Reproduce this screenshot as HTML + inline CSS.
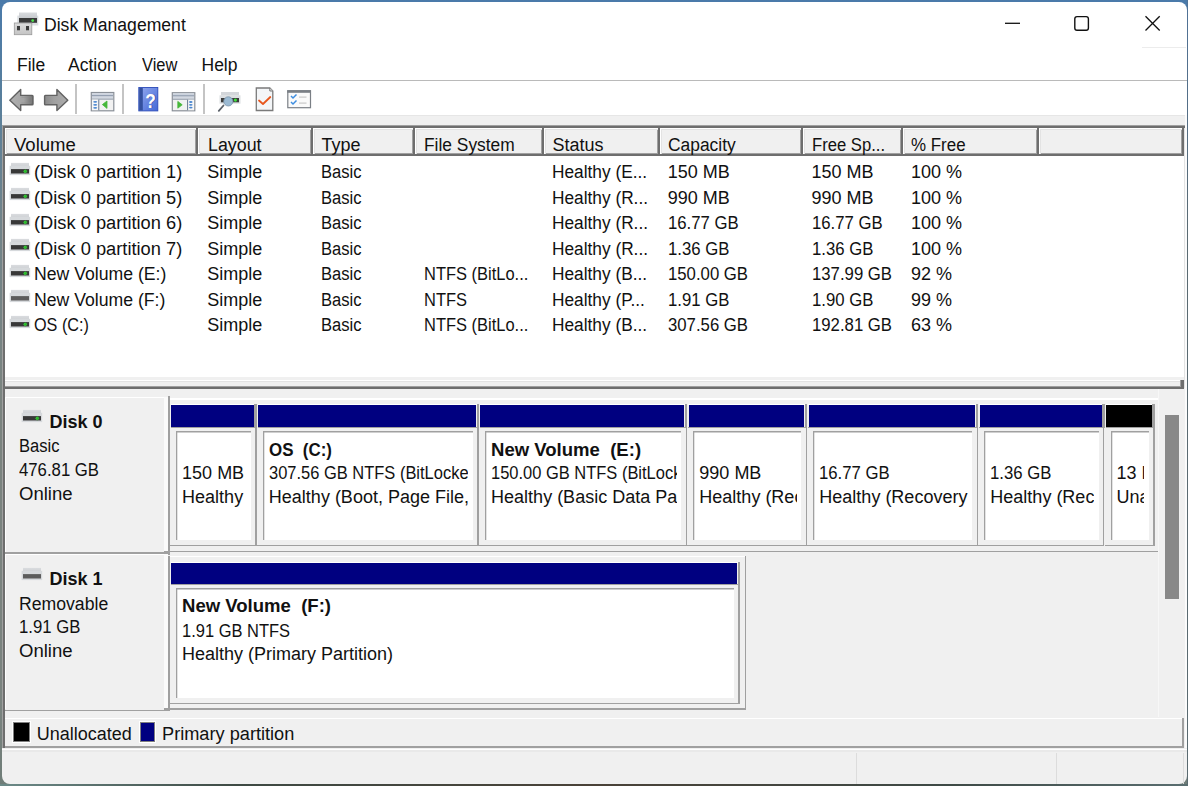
<!DOCTYPE html>
<html><head><meta charset="utf-8">
<style>
*{margin:0;padding:0;box-sizing:border-box}
html,body{width:1188px;height:786px;overflow:hidden}
body{position:relative;background:linear-gradient(180deg,#4a7aaa 0,#587f9c 100px,#72848a 220px,#7b8480 400px,#7b8480 700px,#6f7d78 100%);font-family:"Liberation Sans",sans-serif;color:#111}
.a{position:absolute}
#win{left:2px;top:2px;width:1185px;height:782px;border-radius:8px;background:linear-gradient(#fff 0,#fff 113px,#f0f0f0 113px);overflow:hidden}
.t{position:absolute;white-space:pre;font-size:18px;line-height:20px}
.hl{position:absolute;height:1px}
.vl{position:absolute;width:1px}
.hd{top:128px;height:28px;background:#f0f0f0;border-right:2px solid #6e6e6e;border-bottom:2px solid #6e6e6e;box-shadow:inset 1px 1px #fff,inset 2px 2px #e3e3e3,inset -1px -1px #a0a0a0}
</style></head><body>
<div id="win" class="a"></div>

<!-- title bar -->
<svg class="a" style="left:12px;top:10px" width="30" height="28" viewBox="0 0 30 28">
  <defs>
    <linearGradient id="gtop" x1="0" y1="0" x2="0" y2="1"><stop offset="0" stop-color="#d9dbde"/><stop offset="1" stop-color="#c6c9cd"/></linearGradient>
    <linearGradient id="gplug" x1="0" y1="0" x2="0" y2="1"><stop offset="0" stop-color="#dcdcdc"/><stop offset="1" stop-color="#c4c4c4"/></linearGradient>
  </defs>
  <rect x="5.3" y="5.6" width="21" height="9.9" fill="#dcdfe2"/><rect x="7" y="2.5" width="18" height="6" fill="url(#gtop)"/>
  <rect x="7" y="8" width="18" height="4.8" fill="#3a3a3a"/>
  <circle cx="20.7" cy="10.6" r="1.4" fill="#4ee04e"/>
  <rect x="2.3" y="13" width="17.5" height="11.7" fill="url(#gplug)" stroke="#9a9a9a" stroke-width="0.8"/>
  <rect x="5" y="16" width="3" height="4.3" fill="#3c3c3c"/>
  <rect x="14" y="16" width="3" height="4.3" fill="#3c3c3c"/>
</svg>
<div class="t" style="left:44px;top:15px;font-size:17.6px">Disk Management</div>
<svg class="a" style="left:1000px;top:10px" width="170" height="28" viewBox="1000 10 170 28">
<path d="M1005 23.3H1020" stroke="#111" stroke-width="1.3"/>
<rect x="1074.8" y="16.6" width="13.6" height="13.6" rx="2.2" fill="none" stroke="#111" stroke-width="1.4"/>
<path d="M1145.5 16.3L1159.7 30.5M1159.7 16.3L1145.5 30.5" stroke="#111" stroke-width="1.3"/>
</svg>

<!-- menu -->
<div class="t" style="left:17px;top:55.3px;font-size:17.5px">File</div>
<div class="t" style="left:68px;top:55.3px;font-size:17.5px">Action</div>
<div class="t" style="left:141.8px;top:55.3px;font-size:17.5px;transform:scaleX(0.94);transform-origin:0 0">View</div>
<div class="t" style="left:201.5px;top:55.3px;font-size:17.5px">Help</div>
<div class="a" style="left:2px;top:80px;width:1185px;height:1px;background:#bababa"></div>

<!-- toolbar icons -->
<svg class="a" style="left:0;top:82px" width="330" height="33" viewBox="0 82 330 33">
  <defs>
    <linearGradient id="garrl" x1="0" y1="0" x2="1" y2="0"><stop offset="0" stop-color="#b0b0b0"/><stop offset="0.6" stop-color="#a4a4a4"/><stop offset="1" stop-color="#6e6e6e"/></linearGradient><linearGradient id="garrr" x1="0" y1="0" x2="1" y2="0"><stop offset="0" stop-color="#8a8a8a"/><stop offset="0.4" stop-color="#a0a0a0"/><stop offset="1" stop-color="#acacac"/></linearGradient>
    <linearGradient id="ghelp" x1="0" y1="0" x2="1" y2="1"><stop offset="0" stop-color="#93a9ee"/><stop offset="1" stop-color="#4468d6"/></linearGradient>
  </defs>
  <path d="M9.8 100.2L20.7 89.6V95.4H32.2Q33 95.4 33 96.2V103.9Q33 104.8 32.2 104.8H20.7V110.6Z" fill="url(#garrl)" stroke="#626262" stroke-width="1.4" stroke-linejoin="round"/><path d="M21.5 97.2H31.2V103H21.5" fill="none" stroke="#8c8c8c" stroke-width="0.8" opacity="0.6"/>
  <path d="M67.8 100.2L56.9 89.6V95.4H45.4Q44.6 95.4 44.6 96.2V103.9Q44.6 104.8 45.4 104.8H56.9V110.6Z" fill="url(#garrr)" stroke="#626262" stroke-width="1.4" stroke-linejoin="round"/>
  <!-- console tree icon -->
  <rect x="91.3" y="92.5" width="22.5" height="18.3" fill="#f2f2f2" stroke="#8a9098" stroke-width="1.2"/>
  <rect x="92" y="93.2" width="21" height="2.2" fill="#ccd3de"/>
  <rect x="92" y="95.3" width="21" height="1.1" fill="#74839a"/>
  <rect x="92" y="96.5" width="21" height="2" fill="#d2d8e2"/>
  <rect x="92" y="98.6" width="21" height="1" fill="#8893a3"/>
  <rect x="92" y="99.6" width="6.5" height="10.6" fill="#f7f7f7"/>
  <rect x="98.2" y="99.5" width="1.1" height="10.8" fill="#74839a"/>
  <ellipse cx="95.2" cy="101.8" rx="2" ry="0.9" fill="#4a86d0"/>
  <ellipse cx="95.2" cy="104.8" rx="2" ry="0.9" fill="#4a86d0"/>
  <ellipse cx="95.2" cy="107.8" rx="2" ry="0.9" fill="#4a86d0"/>
  <path d="M102.4 104.6L107 101V108.4Z" fill="#46b83a" stroke="#46b83a" stroke-width="0.8" stroke-linejoin="round"/>
  <!-- help -->
  <rect x="138.8" y="87.5" width="19" height="23.4" fill="url(#ghelp)" stroke="#2c4bb8" stroke-width="0.9"/>
  <rect x="139.2" y="88" width="3.6" height="22.5" fill="#34509e"/>
  <text transform="translate(151.4 108.4) scale(0.82 1)" font-family="Liberation Sans" font-weight="bold" font-size="21" fill="#1e2e70" opacity="0.5" text-anchor="middle">?</text><text transform="translate(150.6 107.6) scale(0.82 1)" font-family="Liberation Sans" font-weight="bold" font-size="21" fill="#fff" text-anchor="middle">?</text>
  <!-- action pane icon -->
  <rect x="172.3" y="92.7" width="22.5" height="18.1" fill="#f2f2f2" stroke="#8a9098" stroke-width="1.2"/>
  <rect x="173" y="93.3" width="21" height="2.2" fill="#ccd3de"/>
  <rect x="173" y="95.4" width="21" height="1.1" fill="#74839a"/>
  <rect x="173" y="96.6" width="21" height="2" fill="#d2d8e2"/>
  <rect x="173" y="98.7" width="21" height="1" fill="#8893a3"/>
  <rect x="187.5" y="99.7" width="6.5" height="10.5" fill="#f7f7f7"/>
  <rect x="187" y="99.6" width="1.1" height="10.7" fill="#74839a"/>
  <ellipse cx="190.8" cy="102" rx="1.8" ry="0.9" fill="#4a86d0"/>
  <ellipse cx="190.8" cy="104.8" rx="1.8" ry="0.9" fill="#4a86d0"/>
  <ellipse cx="190.8" cy="107.6" rx="1.8" ry="0.9" fill="#4a86d0"/>
  <path d="M182.2 104.8L177.8 101.4V108.2Z" fill="#46b83a" stroke="#46b83a" stroke-width="0.8" stroke-linejoin="round"/>
  <!-- rescan -->
  <rect x="221" y="92" width="18" height="3.6" fill="#d3d6da"/>
  <rect x="219.5" y="95.3" width="21" height="8.4" fill="#dcdfe2"/>
  <rect x="221" y="98" width="18" height="4.3" fill="#3c3c3c"/>
  <circle cx="235.4" cy="100.1" r="1.6" fill="#3ee03e"/>
  <path d="M223.5 105.5L218.8 110.8" stroke="#5a6068" stroke-width="1.8" stroke-linecap="round"/>
  <circle cx="228.3" cy="101.4" r="4.6" fill="#9bbad3" stroke="#7d95aa" stroke-width="0.8"/>
  <!-- doc check -->
  <path d="M256.3 88H269.8L272.8 91V110.5H256.3Z" fill="#f4f6f8" stroke="#7a7a7a" stroke-width="1.3"/>
  <path d="M269.8 88V91H272.8" fill="#e0e0e0" stroke="#7a7a7a" stroke-width="1"/>
  <path d="M259 100.5L263 104L270.3 97" fill="none" stroke="#e8571e" stroke-width="1.8" stroke-linecap="round" stroke-linejoin="round"/>
  <!-- checklist -->
  <rect x="287.8" y="90.8" width="22.7" height="16.9" fill="#fafafa" stroke="#7a7f85" stroke-width="1.2"/>
  <rect x="287.2" y="90.2" width="23.8" height="2.6" fill="#7a7f85"/>
  <path d="M291 96L293 98L296.5 94.5M291 102L293 104L296.5 100.5" fill="none" stroke="#3d8de0" stroke-width="1.5"/>
  <rect x="299" y="96.5" width="7.5" height="1.2" fill="#c8c8c8"/>
  <rect x="299" y="102.5" width="7.5" height="1.2" fill="#c8c8c8"/>
</svg>
<!-- toolbar separators -->
<div class="a" style="left:75px;top:84px;width:1.5px;height:30px;background:#c4c4c4"></div>
<div class="a" style="left:122px;top:84px;width:1.5px;height:30px;background:#c4c4c4"></div>
<div class="a" style="left:203px;top:84px;width:1.5px;height:30px;background:#c4c4c4"></div>

<!-- defs -->
<svg width="0" height="0" style="position:absolute">
  <defs>
    <linearGradient id="gdrv" x1="0" y1="0" x2="0" y2="1"><stop offset="0" stop-color="#dadcdf"/><stop offset="1" stop-color="#c9ccd0"/></linearGradient>
    <g id="drv">
      <rect x="11" y="0.9" width="18" height="5" fill="url(#gdrv)"/>
      <rect x="9.6" y="3.8" width="20.6" height="9.3" fill="#d6d9dc"/>
      <rect x="11" y="7.1" width="18" height="4.4" fill="#383838"/>
      <circle cx="25.3" cy="9.3" r="1.6" fill="#3fe83f"/>
      <path d="M23.3 9.3H27.3M25.3 7.3V11.3" stroke="#2aa82a" stroke-width="0.8"/>
    </g>
    <g id="drvf">
      <rect x="11" y="0.9" width="18" height="5" fill="url(#gdrv)"/>
      <rect x="9.6" y="3.8" width="20.6" height="9.3" fill="#d6d9dc"/>
      <rect x="11" y="7.1" width="18" height="4.4" fill="#5c5c5c"/>
    </g>
  </defs>
</svg>
<!-- list view -->
<div class="a" style="left:2px;top:125px;width:1183px;height:1px;background:#a0a0a0"></div>
<div class="a" style="left:3px;top:126px;width:1182px;height:2px;background:#6e6e6e"></div>
<div class="a" style="left:2px;top:115px;width:1185px;height:1px;background:#e6e6e6"></div>
<div class="a" style="left:2px;top:125px;width:1px;height:623px;background:#a0a0a0"></div>
<div class="a" style="left:3px;top:126px;width:2px;height:622px;background:#6e6e6e"></div>
<div class="a" style="left:5px;top:128px;width:1179px;height:249px;background:#fff"></div>
<div class="a" style="left:1184px;top:128px;width:1px;height:260px;background:#e3e3e3"></div>
<div class="a" style="left:1185px;top:115px;width:2px;height:633px;background:#fbfbfb"></div>
<!-- list bottom splitter -->
<div class="a" style="left:5px;top:377px;width:1179px;height:3px;background:#f0f0f0"></div>
<div class="a" style="left:5px;top:380px;width:1179px;height:9px;background:#f0f0f0;box-shadow:inset 0 1px #fff,inset 0 2px #e3e3e3"></div>
<div class="a" style="left:5px;top:386px;width:1179px;height:1px;background:#a0a0a0"></div>
<div class="a" style="left:5px;top:387px;width:1179px;height:2px;background:#6e6e6e"></div>
<div class="a" style="left:1180px;top:380px;width:1px;height:7px;background:#a0a0a0"></div>
<div class="a" style="left:1181px;top:380px;width:3px;height:9px;background:#6e6e6e"></div>
<div class="a hd" style="left:5px;width:193px"></div>
<div class="a hd" style="left:198px;width:115px"></div>
<div class="a hd" style="left:313px;width:102px"></div>
<div class="a hd" style="left:415px;width:129px"></div>
<div class="a hd" style="left:544px;width:116px"></div>
<div class="a hd" style="left:660px;width:143px"></div>
<div class="a hd" style="left:803px;width:100px"></div>
<div class="a hd" style="left:903px;width:136px"></div>
<div class="a hd" style="left:1039px;width:145px"></div>
<div class="t" style="left:14px;top:134.5px;transform:scaleX(1.03);transform-origin:0 0;">Volume</div>
<div class="t" style="left:207.5px;top:134.5px;transform:scaleX(0.99);transform-origin:0 0;">Layout</div>
<div class="t" style="left:321.5px;top:134.5px;">Type</div>
<div class="t" style="left:423.5px;top:134.5px;transform:scaleX(0.965);transform-origin:0 0;">File System</div>
<div class="t" style="left:552.5px;top:134.5px;">Status</div>
<div class="t" style="left:668px;top:134.5px;transform:scaleX(0.967);transform-origin:0 0;">Capacity</div>
<div class="t" style="left:811.5px;top:134.5px;transform:scaleX(0.925);transform-origin:0 0;">Free Sp...</div>
<div class="t" style="left:910.8px;top:134.5px;transform:scaleX(0.94);transform-origin:0 0;">% Free</div>
<svg class="a" style="left:0;top:161.5px" width="40" height="16"><use href="#drv"/></svg>
<div class="t" style="left:34.1px;top:162px;transform:scaleX(1.015);transform-origin:0 0;">(Disk 0 partition 1)</div>
<div class="t" style="left:207.3px;top:162px;">Simple</div>
<div class="t" style="left:321.3px;top:162px;transform:scaleX(0.92);transform-origin:0 0;">Basic</div>
<div class="t" style="left:552.3px;top:162px;transform:scaleX(0.96);transform-origin:0 0;">Healthy (E...</div>
<div class="t" style="left:667.8px;top:162px;">150 MB</div>
<div class="t" style="left:811.5px;top:162px;">150 MB</div>
<div class="t" style="left:911px;top:162px;">100 %</div>
<svg class="a" style="left:0;top:187.0px" width="40" height="16"><use href="#drv"/></svg>
<div class="t" style="left:34.1px;top:187.5px;transform:scaleX(1.015);transform-origin:0 0;">(Disk 0 partition 5)</div>
<div class="t" style="left:207.3px;top:187.5px;">Simple</div>
<div class="t" style="left:321.3px;top:187.5px;transform:scaleX(0.92);transform-origin:0 0;">Basic</div>
<div class="t" style="left:552.3px;top:187.5px;transform:scaleX(0.96);transform-origin:0 0;">Healthy (R...</div>
<div class="t" style="left:667.8px;top:187.5px;">990 MB</div>
<div class="t" style="left:811.5px;top:187.5px;">990 MB</div>
<div class="t" style="left:911px;top:187.5px;">100 %</div>
<svg class="a" style="left:0;top:212.5px" width="40" height="16"><use href="#drv"/></svg>
<div class="t" style="left:34.1px;top:213px;transform:scaleX(1.015);transform-origin:0 0;">(Disk 0 partition 6)</div>
<div class="t" style="left:207.3px;top:213px;">Simple</div>
<div class="t" style="left:321.3px;top:213px;transform:scaleX(0.92);transform-origin:0 0;">Basic</div>
<div class="t" style="left:552.3px;top:213px;transform:scaleX(0.96);transform-origin:0 0;">Healthy (R...</div>
<div class="t" style="left:667.8px;top:213px;transform:scaleX(0.93);transform-origin:0 0;">16.77 GB</div>
<div class="t" style="left:811.5px;top:213px;transform:scaleX(0.93);transform-origin:0 0;">16.77 GB</div>
<div class="t" style="left:911px;top:213px;">100 %</div>
<svg class="a" style="left:0;top:238.0px" width="40" height="16"><use href="#drv"/></svg>
<div class="t" style="left:34.1px;top:238.5px;transform:scaleX(1.015);transform-origin:0 0;">(Disk 0 partition 7)</div>
<div class="t" style="left:207.3px;top:238.5px;">Simple</div>
<div class="t" style="left:321.3px;top:238.5px;transform:scaleX(0.92);transform-origin:0 0;">Basic</div>
<div class="t" style="left:552.3px;top:238.5px;transform:scaleX(0.96);transform-origin:0 0;">Healthy (R...</div>
<div class="t" style="left:667.8px;top:238.5px;transform:scaleX(0.93);transform-origin:0 0;">1.36 GB</div>
<div class="t" style="left:811.5px;top:238.5px;transform:scaleX(0.93);transform-origin:0 0;">1.36 GB</div>
<div class="t" style="left:911px;top:238.5px;">100 %</div>
<svg class="a" style="left:0;top:263.5px" width="40" height="16"><use href="#drv"/></svg>
<div class="t" style="left:34.1px;top:264px;transform:scaleX(0.98);transform-origin:0 0;">New Volume (E:)</div>
<div class="t" style="left:207.3px;top:264px;">Simple</div>
<div class="t" style="left:321.3px;top:264px;transform:scaleX(0.92);transform-origin:0 0;">Basic</div>
<div class="t" style="left:423.8px;top:264px;transform:scaleX(0.915);transform-origin:0 0;">NTFS (BitLo...</div>
<div class="t" style="left:552.3px;top:264px;transform:scaleX(0.96);transform-origin:0 0;">Healthy (B...</div>
<div class="t" style="left:667.8px;top:264px;transform:scaleX(0.93);transform-origin:0 0;">150.00 GB</div>
<div class="t" style="left:811.5px;top:264px;transform:scaleX(0.93);transform-origin:0 0;">137.99 GB</div>
<div class="t" style="left:911px;top:264px;">92 %</div>
<svg class="a" style="left:0;top:289.0px" width="40" height="16"><use href="#drvf"/></svg>
<div class="t" style="left:34.1px;top:289.5px;transform:scaleX(0.98);transform-origin:0 0;">New Volume (F:)</div>
<div class="t" style="left:207.3px;top:289.5px;">Simple</div>
<div class="t" style="left:321.3px;top:289.5px;transform:scaleX(0.92);transform-origin:0 0;">Basic</div>
<div class="t" style="left:423.8px;top:289.5px;transform:scaleX(0.915);transform-origin:0 0;">NTFS</div>
<div class="t" style="left:552.3px;top:289.5px;transform:scaleX(0.96);transform-origin:0 0;">Healthy (P...</div>
<div class="t" style="left:667.8px;top:289.5px;transform:scaleX(0.93);transform-origin:0 0;">1.91 GB</div>
<div class="t" style="left:811.5px;top:289.5px;transform:scaleX(0.93);transform-origin:0 0;">1.90 GB</div>
<div class="t" style="left:911px;top:289.5px;">99 %</div>
<svg class="a" style="left:0;top:314.5px" width="40" height="16"><use href="#drv"/></svg>
<div class="t" style="left:34.1px;top:315px;transform:scaleX(0.9);transform-origin:0 0;">OS (C:)</div>
<div class="t" style="left:207.3px;top:315px;">Simple</div>
<div class="t" style="left:321.3px;top:315px;transform:scaleX(0.92);transform-origin:0 0;">Basic</div>
<div class="t" style="left:423.8px;top:315px;transform:scaleX(0.915);transform-origin:0 0;">NTFS (BitLo...</div>
<div class="t" style="left:552.3px;top:315px;transform:scaleX(0.96);transform-origin:0 0;">Healthy (B...</div>
<div class="t" style="left:667.8px;top:315px;transform:scaleX(0.93);transform-origin:0 0;">307.56 GB</div>
<div class="t" style="left:811.5px;top:315px;transform:scaleX(0.93);transform-origin:0 0;">192.81 GB</div>
<div class="t" style="left:911px;top:315px;">63 %</div>
<div class="a" style="left:1158px;top:389px;width:1px;height:328px;background:#f7f7f7"></div>
<div class="a" style="left:1159px;top:389px;width:25px;height:328px;background:#f0f0f0"></div>
<div class="a" style="left:1164.5px;top:414.5px;width:14px;height:184px;background:#888888"></div>
<div class="a" style="left:5px;top:397px;width:159px;height:155px;background:#f0f0f0;box-shadow:inset 1px 1px #fff"></div>
<div class="a" style="left:164px;top:397px;width:4px;height:157px;background:#fbfbfb"></div>
<div class="a" style="left:5px;top:552px;width:164px;height:1.6px;background:#a0a0a0"></div>
<div class="a" style="left:168px;top:396px;width:2px;height:159px;background:#a0a0a0"></div>
<div class="a" style="left:170px;top:398px;width:988px;height:1.5px;background:#fff"></div>
<div class="a" style="left:164px;top:551px;width:994px;height:1.4px;background:#a0a0a0"></div>
<div class="a" style="left:171px;top:404px;width:85.75px;height:1.2px;background:#fff"></div>
<div class="a" style="left:171.25px;top:405px;width:82.55px;height:21.80000000000001px;background:#000080"></div>
<div class="a" style="left:254.25px;top:404px;width:2.5px;height:24.30000000000001px;background:#a0a0a0"></div>
<div class="a" style="left:171px;top:426.8px;width:85.75px;height:1.5px;background:#a0a0a0"></div>
<div class="a" style="left:255.05px;top:426.8px;width:1.5px;height:119.39999999999999px;background:#a0a0a0"></div>
<div class="a" style="left:170px;top:545px;width:86.45px;height:1.2px;background:#a0a0a0"></div>
<div class="a" style="left:176.2px;top:430.9px;width:74.75px;height:109.30000000000007px;background:#fff;box-shadow:inset 1.3px 1.5px #a0a0a0"></div>
<div class="a" style="left:257.75px;top:404px;width:221.25px;height:1.2px;background:#fff"></div>
<div class="a" style="left:258.0px;top:405px;width:218.05px;height:21.80000000000001px;background:#000080"></div>
<div class="a" style="left:476.5px;top:404px;width:2.5px;height:24.30000000000001px;background:#a0a0a0"></div>
<div class="a" style="left:257.75px;top:426.8px;width:221.25px;height:1.5px;background:#a0a0a0"></div>
<div class="a" style="left:477.3px;top:426.8px;width:1.5px;height:119.39999999999999px;background:#a0a0a0"></div>
<div class="a" style="left:256.75px;top:545px;width:221.95px;height:1.2px;background:#a0a0a0"></div>
<div class="a" style="left:262.95px;top:430.9px;width:210.25px;height:109.30000000000007px;background:#fff;box-shadow:inset 1.3px 1.5px #a0a0a0"></div>
<div class="a" style="left:480px;top:404px;width:207.25px;height:1.2px;background:#fff"></div>
<div class="a" style="left:480.25px;top:405px;width:204.05px;height:21.80000000000001px;background:#000080"></div>
<div class="a" style="left:684.75px;top:404px;width:2.5px;height:24.30000000000001px;background:#a0a0a0"></div>
<div class="a" style="left:480px;top:426.8px;width:207.25px;height:1.5px;background:#a0a0a0"></div>
<div class="a" style="left:685.55px;top:426.8px;width:1.5px;height:119.39999999999999px;background:#a0a0a0"></div>
<div class="a" style="left:479px;top:545px;width:207.95px;height:1.2px;background:#a0a0a0"></div>
<div class="a" style="left:485.2px;top:430.9px;width:196.25px;height:109.30000000000007px;background:#fff;box-shadow:inset 1.3px 1.5px #a0a0a0"></div>
<div class="a" style="left:688.25px;top:404px;width:119.0px;height:1.2px;background:#fff"></div>
<div class="a" style="left:688.5px;top:405px;width:115.8px;height:21.80000000000001px;background:#000080"></div>
<div class="a" style="left:804.75px;top:404px;width:2.5px;height:24.30000000000001px;background:#a0a0a0"></div>
<div class="a" style="left:688.25px;top:426.8px;width:119.0px;height:1.5px;background:#a0a0a0"></div>
<div class="a" style="left:805.55px;top:426.8px;width:1.5px;height:119.39999999999999px;background:#a0a0a0"></div>
<div class="a" style="left:687.25px;top:545px;width:119.7px;height:1.2px;background:#a0a0a0"></div>
<div class="a" style="left:693.45px;top:430.9px;width:108.0px;height:109.30000000000007px;background:#fff;box-shadow:inset 1.3px 1.5px #a0a0a0"></div>
<div class="a" style="left:808.25px;top:404px;width:170.0px;height:1.2px;background:#fff"></div>
<div class="a" style="left:808.5px;top:405px;width:166.8px;height:21.80000000000001px;background:#000080"></div>
<div class="a" style="left:975.75px;top:404px;width:2.5px;height:24.30000000000001px;background:#a0a0a0"></div>
<div class="a" style="left:808.25px;top:426.8px;width:170.0px;height:1.5px;background:#a0a0a0"></div>
<div class="a" style="left:976.55px;top:426.8px;width:1.5px;height:119.39999999999999px;background:#a0a0a0"></div>
<div class="a" style="left:807.25px;top:545px;width:170.7px;height:1.2px;background:#a0a0a0"></div>
<div class="a" style="left:813.45px;top:430.9px;width:159.0px;height:109.30000000000007px;background:#fff;box-shadow:inset 1.3px 1.5px #a0a0a0"></div>
<div class="a" style="left:979.25px;top:404px;width:125.25px;height:1.2px;background:#fff"></div>
<div class="a" style="left:979.5px;top:405px;width:122.05px;height:21.80000000000001px;background:#000080"></div>
<div class="a" style="left:1102.0px;top:404px;width:2.5px;height:24.30000000000001px;background:#a0a0a0"></div>
<div class="a" style="left:979.25px;top:426.8px;width:125.25px;height:1.5px;background:#a0a0a0"></div>
<div class="a" style="left:1102.8px;top:426.8px;width:1.5px;height:119.39999999999999px;background:#a0a0a0"></div>
<div class="a" style="left:978.25px;top:545px;width:125.95px;height:1.2px;background:#a0a0a0"></div>
<div class="a" style="left:984.45px;top:430.9px;width:114.25px;height:109.30000000000007px;background:#fff;box-shadow:inset 1.3px 1.5px #a0a0a0"></div>
<div class="a" style="left:1105.5px;top:404px;width:49.40000000000009px;height:1.2px;background:#fff"></div>
<div class="a" style="left:1105.75px;top:405px;width:46.20000000000009px;height:21.80000000000001px;background:#000000"></div>
<div class="a" style="left:1152.4px;top:404px;width:2.5px;height:24.30000000000001px;background:#a0a0a0"></div>
<div class="a" style="left:1105.5px;top:426.8px;width:49.40000000000009px;height:1.5px;background:#a0a0a0"></div>
<div class="a" style="left:1153.2px;top:426.8px;width:1.5px;height:119.39999999999999px;background:#a0a0a0"></div>
<div class="a" style="left:1104.5px;top:545px;width:50.100000000000094px;height:1.2px;background:#a0a0a0"></div>
<div class="a" style="left:1110.7px;top:430.9px;width:38.40000000000009px;height:109.30000000000007px;background:#fff;box-shadow:inset 1.3px 1.5px #a0a0a0"></div>
<div class="a" style="left:5px;top:554px;width:159px;height:155px;background:#f0f0f0;box-shadow:inset 1px 1px #fff"></div>
<div class="a" style="left:164px;top:554px;width:4px;height:156px;background:#fbfbfb"></div>
<div class="a" style="left:5px;top:709.8px;width:164px;height:1.5px;background:#a0a0a0"></div>
<div class="a" style="left:168px;top:556px;width:2px;height:155px;background:#a0a0a0"></div>
<div class="a" style="left:170px;top:555.8px;width:575px;height:1.2px;background:#fff"></div>
<div class="a" style="left:744.6px;top:556px;width:1.2px;height:154px;background:#a0a0a0"></div>
<div class="a" style="left:164px;top:708.3px;width:582px;height:1.5px;background:#a0a0a0"></div>
<div class="a" style="left:171px;top:562px;width:569px;height:1.2px;background:#fff"></div>
<div class="a" style="left:171.25px;top:563px;width:565.8px;height:20.799999999999955px;background:#000080"></div>
<div class="a" style="left:737.5px;top:562px;width:2.5px;height:23.299999999999955px;background:#a0a0a0"></div>
<div class="a" style="left:171px;top:583.8px;width:569px;height:1.5px;background:#a0a0a0"></div>
<div class="a" style="left:738.3px;top:583.8px;width:1.5px;height:119.90000000000005px;background:#a0a0a0"></div>
<div class="a" style="left:170px;top:702.5px;width:569.7px;height:1.2px;background:#a0a0a0"></div>
<div class="a" style="left:176.2px;top:588.4px;width:558px;height:109.60000000000002px;background:#fff;box-shadow:inset 1.3px 1.5px #a0a0a0"></div>
<svg class="a" style="left:12px;top:408.7px" width="40" height="16"><use href="#drv"/></svg>
<div class="t" style="left:49.5px;top:411.5px;font-weight:bold;">Disk 0</div>
<div class="t" style="left:18.5px;top:435.6px;transform:scaleX(0.92);transform-origin:0 0;">Basic</div>
<div class="t" style="left:18.5px;top:459.7px;transform:scaleX(0.93);transform-origin:0 0;">476.81 GB</div>
<div class="t" style="left:18.5px;top:483.5px;transform:scaleX(1.03);transform-origin:0 0;">Online</div>
<svg class="a" style="left:12px;top:566.5px" width="40" height="16"><use href="#drvf"/></svg>
<div class="t" style="left:49.5px;top:569px;font-weight:bold;">Disk 1</div>
<div class="t" style="left:18.5px;top:593.5px;transform:scaleX(0.98);transform-origin:0 0;">Removable</div>
<div class="t" style="left:18.5px;top:617.3px;transform:scaleX(0.93);transform-origin:0 0;">1.91 GB</div>
<div class="t" style="left:18.5px;top:641px;transform:scaleX(1.03);transform-origin:0 0;">Online</div>
<div class="a" style="left:182.1px;top:430px;width:64.15px;height:80px;overflow:hidden">
<div class="t" style="left:0px;top:33px;">150 MB</div>
<div class="t" style="left:0px;top:56.8px;">Healthy</div>
</div>
<div class="a" style="left:268.85px;top:430px;width:199.65px;height:80px;overflow:hidden">
<div class="t" style="left:0px;top:9.5px;font-weight:bold;transform:scaleX(0.94);transform-origin:0 0;">OS  (C:)</div>
<div class="t" style="left:0px;top:33px;transform:scaleX(0.915);transform-origin:0 0;">307.56 GB NTFS (BitLocker Encrypted)</div>
<div class="t" style="left:0px;top:56.8px;">Healthy (Boot, Page File, Crash Dump, Basic Data Partition)</div>
</div>
<div class="a" style="left:491.1px;top:430px;width:185.65px;height:80px;overflow:hidden">
<div class="t" style="left:0px;top:9.5px;font-weight:bold;transform:scaleX(1.03);transform-origin:0 0;">New Volume  (E:)</div>
<div class="t" style="left:0px;top:33px;transform:scaleX(0.915);transform-origin:0 0;">150.00 GB NTFS (BitLocker Encrypted)</div>
<div class="t" style="left:0px;top:56.8px;">Healthy (Basic Data Partition)</div>
</div>
<div class="a" style="left:699.35px;top:430px;width:97.4px;height:80px;overflow:hidden">
<div class="t" style="left:0px;top:33px;">990 MB</div>
<div class="t" style="left:0px;top:56.8px;">Healthy (Recovery Partition)</div>
</div>
<div class="a" style="left:819.35px;top:430px;width:148.4px;height:80px;overflow:hidden">
<div class="t" style="left:0px;top:33px;transform:scaleX(0.93);transform-origin:0 0;">16.77 GB</div>
<div class="t" style="left:0px;top:56.8px;">Healthy (Recovery Partition)</div>
</div>
<div class="a" style="left:990.35px;top:430px;width:103.65px;height:80px;overflow:hidden">
<div class="t" style="left:0px;top:33px;transform:scaleX(0.93);transform-origin:0 0;">1.36 GB</div>
<div class="t" style="left:0px;top:56.8px;">Healthy (Recovery Partition)</div>
</div>
<div class="a" style="left:1116.6px;top:430px;width:27.8px;height:80px;overflow:hidden">
<div class="t" style="left:0px;top:33px;">13 MB</div>
<div class="t" style="left:0px;top:56.8px;">Unallocated</div>
</div>
<div class="a" style="left:182px;top:590px;width:548px;height:80px;overflow:hidden">
<div class="t" style="left:0px;top:6.3px;font-weight:bold;transform:scaleX(1.03);transform-origin:0 0;">New Volume  (F:)</div>
<div class="t" style="left:0px;top:30.7px;transform:scaleX(0.915);transform-origin:0 0;">1.91 GB NTFS</div>
<div class="t" style="left:0px;top:54.3px;">Healthy (Primary Partition)</div>
</div>
<div class="a" style="left:5px;top:717.5px;width:1179px;height:1.5px;background:#fff"></div>
<div class="a" style="left:5px;top:745.8px;width:1179px;height:2.4px;background:#a0a0a0"></div>
<div class="a" style="left:1181.5px;top:718px;width:2.5px;height:30px;background:#a0a0a0"></div>
<div class="a" style="left:13.3px;top:722px;width:16.3px;height:20px;background:#000;border:1px solid #808080;outline:1px solid #fff"></div>
<div class="a" style="left:139.7px;top:722px;width:15.8px;height:20px;background:#000080;border:1px solid #808080;outline:1px solid #fff"></div>
<div class="t" style="left:36.8px;top:724.3px;">Unallocated</div>
<div class="t" style="left:162.3px;top:724.3px;transform:scaleX(1.01);transform-origin:0 0;">Primary partition</div>
<div class="a" style="left:2px;top:748.8px;width:1185px;height:1.5px;background:#fff"></div>
<div class="a" style="left:2px;top:750.4px;width:1185px;height:1.5px;background:#e9e9e9"></div>
<div class="a" style="left:856px;top:753px;width:1px;height:31px;background:#dcdcdc"></div>
<div class="a" style="left:1056px;top:753px;width:1px;height:31px;background:#dcdcdc"></div>
<div class="a" style="left:1183px;top:753px;width:1px;height:31px;background:#dcdcdc"></div>
<div class="a" style="left:1142px;top:47px;width:44px;height:1px;background:#ececec"></div>
<div class="a" style="left:1187px;top:0;width:1px;height:786px;background:linear-gradient(180deg,#4f7298 0,#5a6a72 30%,#5a6a70 100%)"></div>
<div class="a" style="left:0;top:784px;width:1188px;height:2px;background:linear-gradient(90deg,#6c8a88 0,#3e4a44 20%,#4a4238 50%,#3e4a46 80%,#5a6e70 100%)"></div>
</body></html>
